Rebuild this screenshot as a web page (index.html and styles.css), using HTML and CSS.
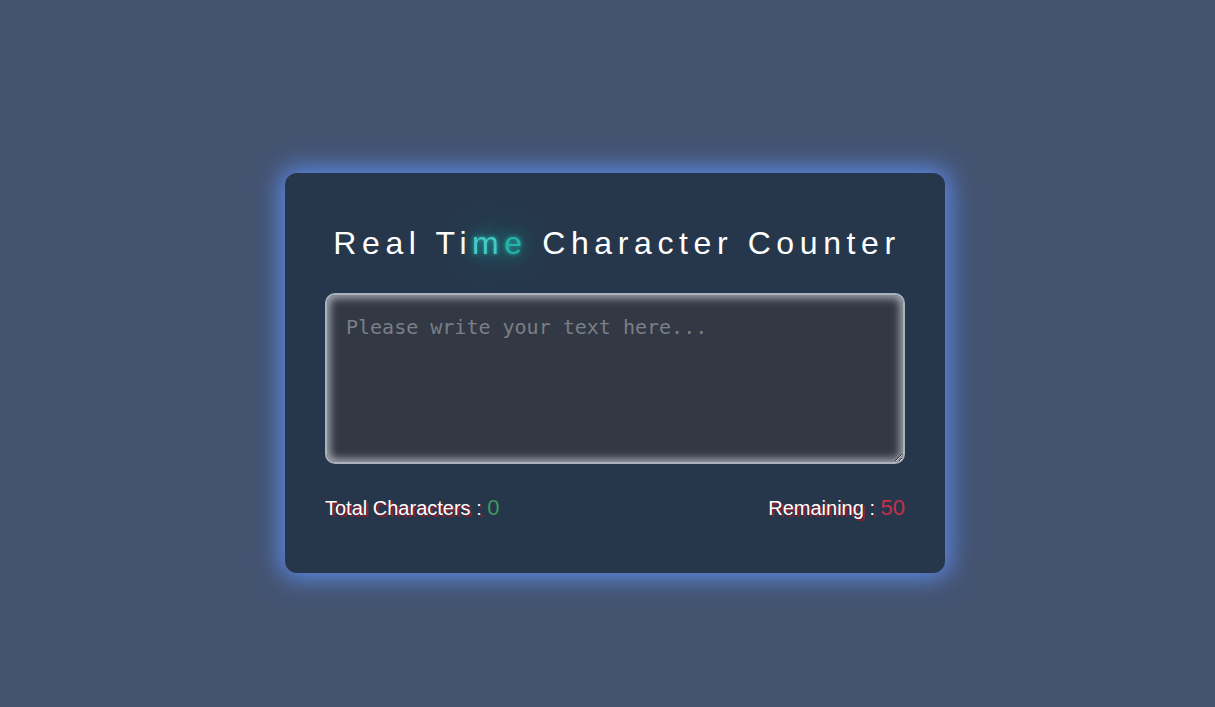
FILE: index.html
```html
<!DOCTYPE html>
<html lang="en">
<head>
<meta charset="utf-8">
<title>Real Time Character Counter</title>
<link rel="stylesheet" href="styles.css">
</head>
<body>
<div class="card">
  <h1 class="title">Real Ti<span class="glow glow-m">m</span><span class="glow glow-e">e</span> Character Counter</h1>
  <textarea class="input" placeholder="Please write your text here..."></textarea>
  <div class="stats">
    <p class="stat">Total Characters : <span class="num num-total">0</span></p>
    <p class="stat">Remaining : <span class="num num-left">50</span></p>
  </div>
</div>
</body>
</html>
```
FILE: styles.css
```css
* { box-sizing: border-box; }
html, body { height: 100%; }
body {
  margin: 0;
  padding: 39px 0 0 15px;
  background: #435370;
  font-family: "Liberation Sans", Arial, sans-serif;
  display: flex;
  align-items: center;
  justify-content: center;
}
.card {
  width: 660px;
  height: 400px;
  background: #27374b;
  border-radius: 12px;
  padding: 52px 40px 0;
  box-shadow: 0 0 24px 5px #5d89e6;
  display: flex;
  flex-direction: column;
}
.title {
  margin: 0 0 31px;
  padding-left: 4px;
  text-align: center;
  color: #fff;
  font-weight: normal;
  font-size: 32px;
  letter-spacing: 5.6px;
  line-height: 37px;
}
.glow {
  color: #22b5aa;
  text-shadow: 0 0 4px #2ab8b0, 0 0 18px #1aa59c, 0 0 40px #168f8a;
}
.glow-m { color: #48ccca; filter: blur(0.7px); }
.glow-e { filter: blur(0.4px); }
.input {
  width: 580px;
  height: 171px;
  flex: none;
  resize: both;
  background: #323844;
  border: 2px solid #aab2bd;
  border-radius: 10px;
  box-shadow: inset 0 0 8px 3px rgba(205, 210, 218, 0.75);
  padding: 20px 19px;
  font-family: "DejaVu Sans Mono", "Liberation Mono", monospace;
  font-size: 20px;
  color: #ddd;
  outline: none;
}
.input::placeholder { color: #7a7f86; }
.stats {
  margin-top: 32px;
  display: flex;
  justify-content: space-between;
}
.stat {
  margin: 0;
  color: #fff;
  font-size: 20px;
  line-height: 23px;
  text-shadow: 2px 2px 0 #8a1c2e;
}
.num { text-shadow: none; font-size: 22px; }
.num-total { color: #3d9a5c; }
.num-left { color: #c5304b; }
```
